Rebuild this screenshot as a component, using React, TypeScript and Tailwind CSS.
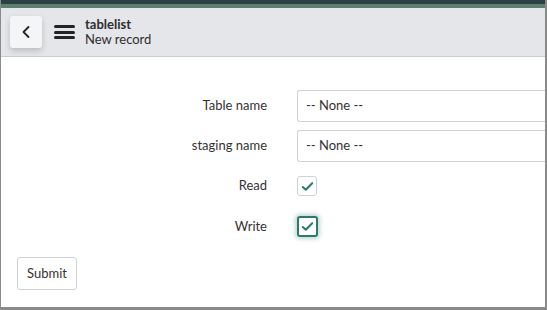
import { ChevronLeft } from "lucide-react";

function Check() {
  return (
    <svg viewBox="0 0 16 16" className="h-[15px] w-[15px]" fill="none">
      <path d="M3 8.5l3.2 3L13 4.5" stroke="#2d7a6c" strokeWidth="2.2" strokeLinecap="round" strokeLinejoin="round" />
    </svg>
  );
}

function Row({ label, children, className = "" }: { label: string; children: React.ReactNode; className?: string }) {
  return (
    <div className={`flex items-center ${className}`}>
      <div className="w-[266px] shrink-0 text-right text-[13px] text-[#333]">{label}</div>
      <div className="ml-[30px] flex-1">{children}</div>
    </div>
  );
}

export default function App() {
  return (
    <div
      className="h-[310px] w-[547px] overflow-hidden bg-white"
      style={{ fontFamily: "Lato, 'Open Sans', sans-serif" }}
    >
      <div className="flex h-full flex-col border-b-[3px] border-l border-r-2 border-[#8a8a8a]">
        <div className="h-1 shrink-0 bg-[#2b4244]" />
        <div className="h-1 shrink-0 bg-[#5e7e70]" />
        <div className="flex h-[49px] shrink-0 items-center border-b border-[#c9cccf] bg-[#e4e6e9]">
          <button className="ml-[9px] flex h-[32px] w-[32px] items-center justify-center rounded-[3px] bg-[#f4f5f6] shadow-[0_3px_6px_rgba(0,0,0,0.18)]">
            <ChevronLeft className="h-5 w-5 text-[#222]" strokeWidth={2.2} />
          </button>
          <div className="ml-[12px] flex h-[14px] w-[21px] flex-col justify-between">
            <div className="h-[3px] rounded-sm bg-[#222]" />
            <div className="h-[3px] rounded-sm bg-[#222]" />
            <div className="h-[3px] rounded-sm bg-[#222]" />
          </div>
          <div className="ml-[10px] flex flex-col leading-[15px]">
            <span className="text-[13px] font-bold text-[#2e2e2e]">tablelist</span>
            <span className="text-[13px] text-[#2e2e2e]">New record</span>
          </div>
        </div>

        <div className="flex-1 pt-[33px]">
          <Row label="Table name">
            <div className="flex h-[32px] items-center rounded-l-[3px] border border-r-0 border-[#cfd2d4] pl-[8px] text-[13px] text-[#333]">
              -- None --
            </div>
          </Row>
          <Row label="staging name" className="mt-[8px]">
            <div className="flex h-[32px] items-center rounded-l-[3px] border border-r-0 border-[#cfd2d4] pl-[8px] text-[13px] text-[#333]">
              -- None --
            </div>
          </Row>
          <Row label="Read" className="mt-[14px]">
            <div className="flex h-[20px] w-[20px] items-center justify-center rounded-[3px] border border-[#cfd2d4] bg-white">
              <Check />
            </div>
          </Row>
          <Row label="Write" className="mt-[20px]">
            <div className="flex h-[21px] w-[21px] items-center justify-center rounded-[3px] border-2 border-[#2d7a6c] bg-white shadow-[0_0_4px_2px_rgba(45,122,108,0.3)]">
              <Check />
            </div>
          </Row>

          <button className="ml-[16px] mt-[20px] h-[33px] rounded-[3px] border border-[#cfd2d4] bg-white px-[9px] text-[13px] text-[#333]">
            Submit
          </button>
        </div>
      </div>
    </div>
  );
}
